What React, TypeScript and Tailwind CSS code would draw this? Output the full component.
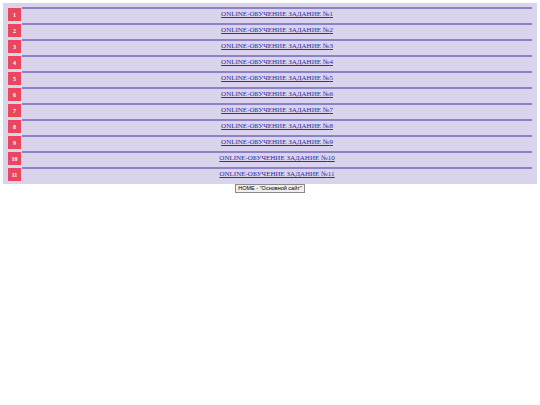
import React from "react";

const tasks = Array.from({ length: 11 }, (_, i) => i + 1);

export default function App() {
  return (
    <div className="min-h-screen bg-white pt-[3px]" style={{ fontFamily: '"Liberation Serif", serif' }}>
      <div className="mx-[3px] bg-[#d9d3ec] pl-[5px] pr-[5px] pt-[4px] pb-[1px]">
        {tasks.map((n) => (
          <div key={n} className="flex h-[16px]">
            <div className="mt-[1px] flex h-[13px] w-[13px] shrink-0 items-center justify-center bg-[#e9475b] text-[6px] font-bold leading-none text-white">
              {n}
            </div>
            <div className="ml-[1px] flex flex-1 items-center justify-center border-t-2 border-[#8a82c4] pb-[3px]">
              <a href="#" className="text-[7px] leading-none text-[#2f2fa8] underline">
                ONLINE-ОБУЧЕНИЕ ЗАДАНИЕ №{n}
              </a>
            </div>
          </div>
        ))}
      </div>
      <div className="flex justify-center">
        <button
          className="h-[9px] border border-[#8a8a8a] bg-[#efefef] px-[2px] text-[5.5px] leading-none text-black"
          style={{ fontFamily: '"Liberation Sans", sans-serif' }}
        >
          HOME - "Основной сайт"
        </button>
      </div>
    </div>
  );
}
